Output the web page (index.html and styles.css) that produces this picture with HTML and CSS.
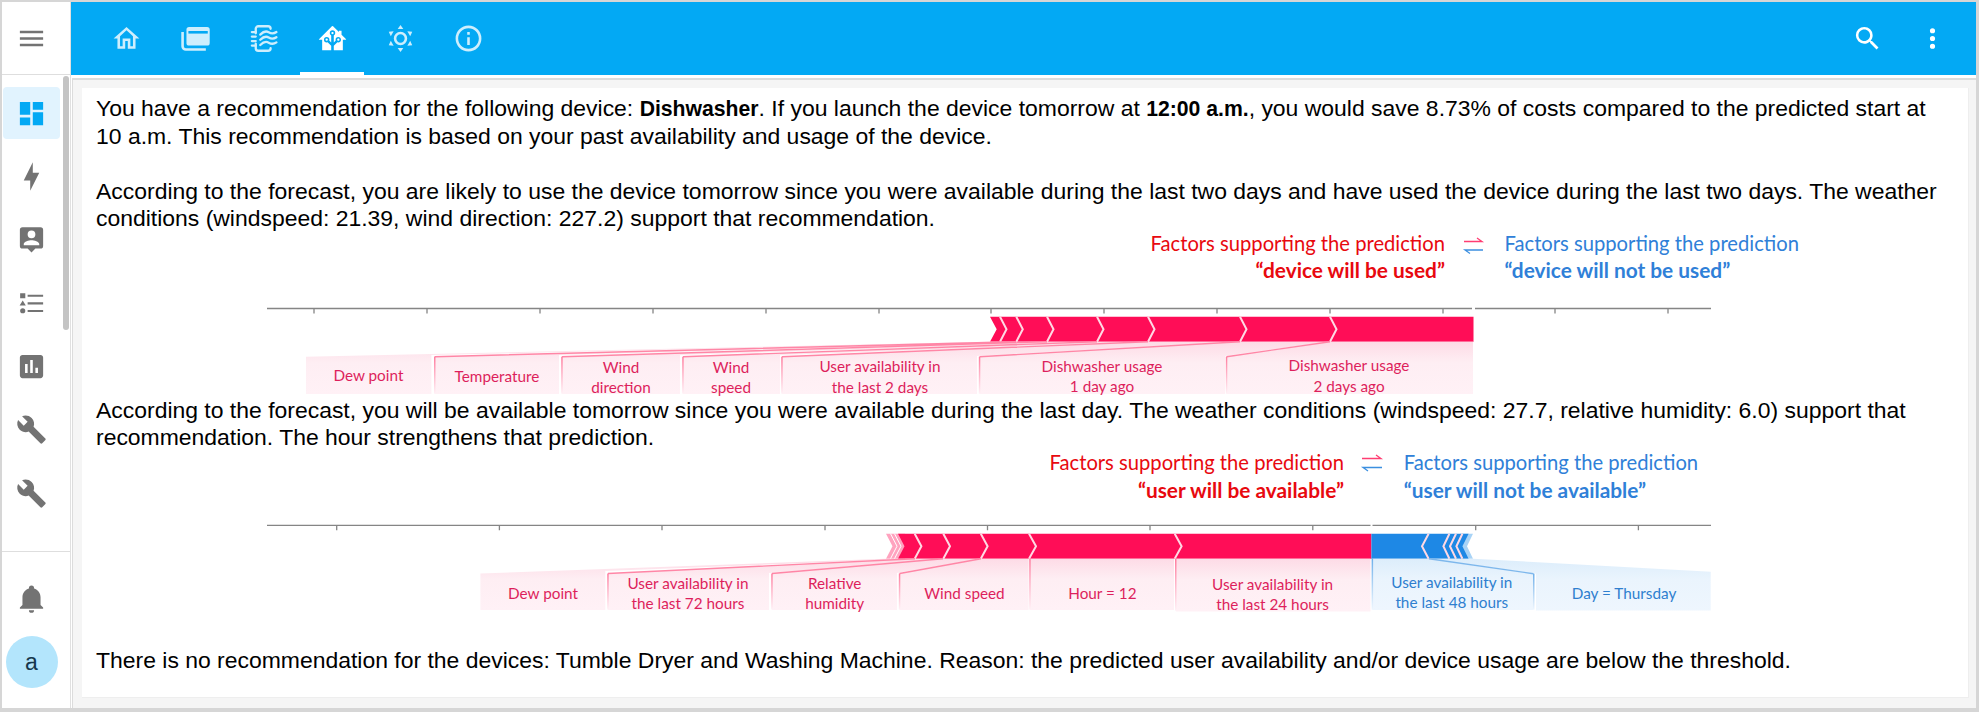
FILE: index.html
```html
<!DOCTYPE html>
<html lang="en">
<head>
    <meta charset="UTF-8">
    <meta name="viewport" content="width=device-width, initial-scale=1.0">
    <title>Recommendations</title>
    <link rel="stylesheet" href="styles.css">
</head>
<body>
    <div class="app">
        <aside class="sidebar">
            <div class="sidebar-top">
                <svg class="icon" viewBox="0 0 24 24"><path d="M3,6H21V8H3V6M3,11H21V13H3V11M3,16H21V18H3V16Z"/></svg>
            </div>
            <nav class="side-nav">
                <div class="side-item active"><svg class="icon" viewBox="0 0 24 24"><path d="M13,3V9H21V3M13,21H21V11H13M3,21H11V15H3M3,13H11V3H3V13Z"/></svg></div>
                <div class="side-item"><svg class="icon" viewBox="0 0 24 24"><path d="M11 15H6L13 1V9H18L11 23V15Z"/></svg></div>
                <div class="side-item"><svg class="icon" viewBox="0 0 24 24"><path fill-rule="evenodd" d="M5 2.5H19A2 2 0 0 1 21 4.5V17A2 2 0 0 1 19 19H15L12 22L9 19H5A2 2 0 0 1 3 17V4.5A2 2 0 0 1 5 2.5ZM12 5A3 3 0 1 0 12 11A3 3 0 1 0 12 5ZM6 16.5H18V15.5C18 13.5 14 12.5 12 12.5C10 12.5 6 13.5 6 15.5Z"/></svg></div>
                <div class="side-item"><svg class="icon" viewBox="0 0 24 24"><path d="M3.2 4H7.2V8H3.2ZM5.2 9.6L7.6 13.6H2.8ZM5.2 15.6A2 2 0 1 1 5.2 19.6A2 2 0 1 1 5.2 15.6ZM9 5.2H21V6.8H9ZM9 11.1H21V12.7H9ZM9 17H21V18.6H9Z"/></svg></div>
                <div class="side-item"><svg class="icon" viewBox="0 0 24 24"><path d="M19 3H5C3.9 3 3 3.9 3 5V19C3 20.1 3.9 21 5 21H19C20.1 21 21 20.1 21 19V5C21 3.9 20.1 3 19 3M9 17H7V10H9V17M13 17H11V7H13V17M17 17H15V13H17V17Z"/></svg></div>
                <div class="side-item"><svg class="icon" viewBox="0 0 24 24"><path d="M22.7,19L13.6,9.9C14.5,7.6 14,4.9 12.1,3C10.1,1 7.1,0.6 4.7,1.7L9,6L6,9L1.6,4.7C0.4,7.1 0.9,10.1 2.9,12.1C4.8,14 7.5,14.5 9.8,13.6L18.9,22.7C19.3,23.1 19.9,23.1 20.3,22.7L22.6,20.4C23.1,20 23.1,19.3 22.7,19Z"/></svg></div>
                <div class="side-item"><svg class="icon" viewBox="0 0 24 24"><path d="M22.7,19L13.6,9.9C14.5,7.6 14,4.9 12.1,3C10.1,1 7.1,0.6 4.7,1.7L9,6L6,9L1.6,4.7C0.4,7.1 0.9,10.1 2.9,12.1C4.8,14 7.5,14.5 9.8,13.6L18.9,22.7C19.3,23.1 19.9,23.1 20.3,22.7L22.6,20.4C23.1,20 23.1,19.3 22.7,19Z"/></svg></div>
            </nav>
            <div class="sidebar-bottom">
                <div class="side-item"><svg class="icon" viewBox="0 0 24 24"><path d="M21,19V20H3V19L5,17V11C5,7.9 7.03,5.17 10,4.29C10,4.19 10,4.1 10,4A2,2 0 0,1 12,2A2,2 0 0,1 14,4C14,4.1 14,4.19 14,4.29C16.97,5.17 19,7.9 19,11V17L21,19M14,21A2,2 0 0,1 12,23A2,2 0 0,1 10,21"/></svg></div>
                <div class="avatar">a</div>
            </div>
            <div class="side-scroll"></div>
        </aside>

        <main class="main">
            <header class="topbar">
                <div class="tab"><svg class="icon" viewBox="0 0 24 24"><path d="M12 5.69L17 10.19V18H15V12H9V18H7V10.19L12 5.69M12 3L2 12H5V20H11V14H13V20H19V12H22"/></svg></div>
                <div class="tab"><svg class="icon" viewBox="0 0 24 24"><path d="M2 7V18A2.5 2.5 0 0 0 4.5 20.5H20" fill="none" stroke="currentColor" stroke-width="2"/><rect class="cards-front" x="5" y="3" width="18" height="14.5" rx="2"/><rect class="cards-stripe" x="6.5" y="6.2" width="15" height="2"/></svg></div>
                <div class="tab"><svg class="icon" viewBox="0 0 24 24"><g fill="none" stroke="currentColor" stroke-width="1.8" stroke-linecap="round"><path d="M6 8V4.5A2 2 0 0 1 8 2.5H15.5A2 2 0 0 1 17.5 4.5"/><path d="M6 16V19.5A2 2 0 0 0 8 21.5H15.5A2 2 0 0 0 17.5 19.5"/><path d="M3 7H6M3 10.5H6M3 14H6M3 17.5H6"/><path d="M9.5 9C12 6.5 14 6 16 7.2C18 8.4 20 8.4 22 7"/><path d="M9.5 13C12 10.5 14 10 16 11.2C18 12.4 20 12.4 22 11"/><path d="M9.5 17C12 14.5 14 14 16 15.2C18 16.4 20 16.4 22 15"/></g></svg></div>
                <div class="tab active"><svg class="icon" viewBox="0 0 24 24"><path d="M21.8,13H20V21H13V17.67L15.79,14.88L16.5,15C17.66,15 18.6,14.06 18.6,12.9C18.6,11.74 17.66,10.8 16.5,10.8A2.1,2.1 0 0,0 14.4,12.9L14.5,13.61L13,15.13V9.65C13.66,9.29 14.1,8.6 14.1,7.8A2.1,2.1 0 0,0 12,5.7A2.1,2.1 0 0,0 9.9,7.8C9.9,8.6 10.34,9.29 11,9.65V15.13L9.5,13.61L9.6,12.9A2.1,2.1 0 0,0 7.5,10.8A2.1,2.1 0 0,0 5.4,12.9A2.1,2.1 0 0,0 7.5,15L8.21,14.88L11,17.67V21H4V13H2.25C1.83,13 1.42,13 1.42,12.79C1.43,12.57 1.85,12.15 2.29,11.71L11,3C11.33,2.67 11.67,2.33 12,2.33C12.33,2.33 12.67,2.67 13,3L17,7V6H19V9L21.78,11.78C22.15,12.15 22.54,12.54 22.56,12.78C22.57,13 22.18,13 21.8,13M7.5,12A0.9,0.9 0 0,1 8.4,12.9A0.9,0.9 0 0,1 7.5,13.8A0.9,0.9 0 0,1 6.6,12.9A0.9,0.9 0 0,1 7.5,12M16.5,12C17,12 17.4,12.4 17.4,12.9C17.4,13.4 17,13.8 16.5,13.8A0.9,0.9 0 0,1 15.6,12.9A0.9,0.9 0 0,1 16.5,12M12,6.9C12.5,6.9 12.9,7.3 12.9,7.8C12.9,8.3 12.5,8.7 12,8.7C11.5,8.7 11.1,8.3 11.1,7.8C11.1,7.3 11.5,6.9 12,6.9Z"/></svg></div>
                <div class="tab"><svg class="icon" viewBox="0 0 24 24"><circle cx="12" cy="12" r="4.2" fill="none" stroke="currentColor" stroke-width="2"/><g id="sun-rays"><path d="M12 1.5L14.2 4.6H9.8Z"/><path d="M12 1.5L14.2 4.6H9.8Z" transform="rotate(60 12 12)"/><path d="M12 1.5L14.2 4.6H9.8Z" transform="rotate(120 12 12)"/><path d="M12 1.5L14.2 4.6H9.8Z" transform="rotate(180 12 12)"/><path d="M12 1.5L14.2 4.6H9.8Z" transform="rotate(240 12 12)"/><path d="M12 1.5L14.2 4.6H9.8Z" transform="rotate(300 12 12)"/></g></svg></div>
                <div class="tab"><svg class="icon" viewBox="0 0 24 24"><path d="M11,9H13V7H11M12,20C7.59,20 4,16.41 4,12C4,7.59 7.59,4 12,4C16.41,4 20,7.59 20,12C20,16.41 16.41,20 12,20M12,2A10,10 0 0,0 2,12A10,10 0 0,0 12,22A10,10 0 0,0 22,12A10,10 0 0,0 12,2M11,17H13V11H11V17Z"/></svg></div>
                <div class="topbar-actions">
                    <div class="action"><svg class="icon" viewBox="0 0 24 24"><path d="M9.5,3A6.5,6.5 0 0,1 16,9.5C16,11.11 15.41,12.59 14.44,13.73L14.71,14H15.5L20.5,19L19,20.5L14,15.5V14.71L13.73,14.44C12.59,15.41 11.11,16 9.5,16A6.5,6.5 0 0,1 3,9.5A6.5,6.5 0 0,1 9.5,3M9.5,5C7,5 5,7 5,9.5C5,12 7,14 9.5,14C12,14 14,12 14,9.5C14,7 12,5 9.5,5Z"/></svg></div>
                    <div class="action"><svg class="icon" viewBox="0 0 24 24"><path d="M12,16A2,2 0 0,1 14,18A2,2 0 0,1 12,20A2,2 0 0,1 10,18A2,2 0 0,1 12,16M12,10A2,2 0 0,1 14,12A2,2 0 0,1 12,14A2,2 0 0,1 10,12A2,2 0 0,1 12,10M12,4A2,2 0 0,1 14,6A2,2 0 0,1 12,8A2,2 0 0,1 10,6A2,2 0 0,1 12,4Z"/></svg></div>
                </div>
            </header>

            <div class="panel">
                <section class="card">
                    <p>You have a recommendation for the following device: <b>Dishwasher</b>. If you launch the device tomorrow at <b>12:00 a.m.</b>, you would save 8.73% of costs compared to the predicted start at 10 a.m. This recommendation is based on your past availability and usage of the device.</p>
                    <p class="gap">According to the forecast, you are likely to use the device tomorrow since you were available during the last two days and have used the device during the last two days. The weather conditions (windspeed: 21.39, wind direction: 227.2) support that recommendation.</p>

                    <svg class="plot plot-one" viewBox="96 228 1858 169">
                        <defs>
                            <linearGradient id="pink-fill" x1="0" y1="0" x2="0" y2="1"><stop offset="0" stop-color="#fddbe6"/><stop offset="0.4" stop-color="#feeef3"/><stop offset="1" stop-color="#fff1f6"/></linearGradient>
                            <linearGradient id="blue-fill" x1="0" y1="0" x2="0" y2="1"><stop offset="0" stop-color="#dcedfb"/><stop offset="0.4" stop-color="#eaf4fd"/><stop offset="1" stop-color="#eef6fe"/></linearGradient>
                            <linearGradient id="pink-edge" x1="0" y1="0" x2="0" y2="1"><stop offset="0" stop-color="#ff7d9f"/><stop offset="1" stop-color="#fff1f6"/></linearGradient>
                            <linearGradient id="blue-edge" x1="0" y1="0" x2="0" y2="1"><stop offset="0" stop-color="#6fb0ea"/><stop offset="1" stop-color="#eef6fe"/></linearGradient>
                        </defs>

                        <text class="head red" x="1445" y="250.5" text-anchor="end">Factors supporting the prediction</text>
                        <text class="head red strong" x="1445" y="278" text-anchor="end">“device will be used”</text>
                        <path class="swap-red" d="M1464 241.5H1482L1477 238"/>
                        <path class="swap-blue" d="M1483 250H1465L1470 253.5"/>
                        <text class="head blue" x="1504.5" y="250.5">Factors supporting the prediction</text>
                        <text class="head blue strong" x="1504.5" y="278">“device will not be used”</text>

                        <path class="axis" d="M267 308.5H1472M1475 308.5H1711M314 308.5v5M427 308.5v5M540 308.5v5M653 308.5v5M766 308.5v5M879 308.5v5M991 308.5v5M1104 308.5v5M1217 308.5v5M1330 308.5v5M1443 308.5v5M1555 308.5v5M1668 308.5v5"/>

                        <path class="bar-red" d="M990 316.7H1473.5V341.7H990L996.7 329.2Z"/>
                        <path class="notch" d="M1000 316.7L1006.5 329.2L1000 341.7M1016.3 316.7L1022.8 329.2L1016.3 341.7M1047 316.7L1053.5 329.2L1047 341.7M1097 316.7L1103.5 329.2L1097 341.7M1148 316.7L1154.5 329.2L1148 341.7M1240 316.7L1246.5 329.2L1240 341.7M1330 316.7L1336.5 329.2L1330 341.7"/>

                        <path class="cell-pink" d="M306 394V356.7L990 341.7H1016L431.4 355V394Z"/>
                        <path class="cell-pink" d="M434.7 394V356.7L1016 341.7H1047L559 355V394Z"/>
                        <path class="cell-pink" d="M562 394V356.7L1047 341.7H1097L680 355V394Z"/>
                        <path class="cell-pink" d="M683 394V356.7L1097 341.7H1148L780 355V394Z"/>
                        <path class="cell-pink" d="M782 394V356.7L1148 341.7H1240L977 356V394Z"/>
                        <path class="cell-pink" d="M979.6 394V356.7L1240 341.7H1330L1225 356V394Z"/>
                        <path class="cell-pink" d="M1226.5 394V356.7L1330 341.7H1473V394Z"/>

                        <path class="link-pink" d="M434.7 356.7L1016 341.7M562 356.7L1047 341.7M683 356.7L1097 341.7M782 356.7L1148 341.7M979.6 356.7L1240 341.7M1226.5 356.7L1330 341.7"/>
                        <rect class="edge-pink" x="434" y="356.7" width="1.5" height="37"/>
                        <rect class="edge-pink" x="561.2" y="356.7" width="1.5" height="37"/>
                        <rect class="edge-pink" x="682.2" y="356.7" width="1.5" height="37"/>
                        <rect class="edge-pink" x="781.2" y="356.7" width="1.5" height="37"/>
                        <rect class="edge-pink" x="978.8" y="356.7" width="1.5" height="37"/>
                        <rect class="edge-pink" x="1225.8" y="356.7" width="1.5" height="37"/>

                        <text class="tag pink" x="368.4" y="381">Dew point</text>
                        <text class="tag pink" x="497" y="382">Temperature</text>
                        <text class="tag pink" x="621" y="372.5">Wind</text>
                        <text class="tag pink" x="621" y="393">direction</text>
                        <text class="tag pink" x="731" y="372.5">Wind</text>
                        <text class="tag pink" x="731" y="393">speed</text>
                        <text class="tag pink" x="880" y="372">User availability in</text>
                        <text class="tag pink" x="880" y="392.5">the last 2 days</text>
                        <text class="tag pink" x="1102" y="371.5">Dishwasher usage</text>
                        <text class="tag pink" x="1102" y="392">1 day ago</text>
                        <text class="tag pink" x="1349" y="371">Dishwasher usage</text>
                        <text class="tag pink" x="1349" y="391.5">2 days ago</text>
                    </svg>

                    <p>According to the forecast, you will be available tomorrow since you were available during the last day. The weather conditions (windspeed: 27.7, relative humidity: 6.0) support that recommendation. The hour strengthens that prediction.</p>

                    <svg class="plot plot-two" viewBox="96 446 1858 200">
                        <text class="head red" x="1344" y="469" text-anchor="end">Factors supporting the prediction</text>
                        <text class="head red strong" x="1344" y="496.5" text-anchor="end">“user will be available”</text>
                        <path class="swap-red" d="M1362 457.5H1381L1376 454"/>
                        <path class="swap-blue" d="M1382 466.5H1363L1368 470"/>
                        <text class="head blue" x="1403.7" y="469">Factors supporting the prediction</text>
                        <text class="head blue strong" x="1403.7" y="496.5">“user will not be available”</text>

                        <path class="axis" d="M267 524.3H1370.5M1372.5 524.3H1711M336.7 524.3v5M499.4 524.3v5M662 524.3v5M825 524.3v5M987.5 524.3v5M1150 524.3v5M1312.8 524.3v5M1475.7 524.3v5M1638.4 524.3v5"/>

                        <path class="bar-fade-red" d="M886 532.7H905V557.7H886L892.5 545.2Z"/>
                        <path class="notch-soft" d="M890.5 532.7L897 545.2L890.5 557.7M894.5 532.7L901 545.2L894.5 557.7"/>
                        <path class="bar-red" d="M898 532.7H1371.4V557.7H898L904.5 545.2Z"/>
                        <path class="notch" d="M914.7 532.7L921.4 545.2L914.7 557.7M943.3 532.7L950 545.2L943.3 557.7M980.8 532.7L987.6 545.2L980.8 557.7M1029 532.7L1036 545.2L1029 557.7M1174.7 532.7L1181.6 545.2L1174.7 557.7"/>

                        <path class="bar-fade-blue" d="M1460 532.7H1473L1467 545.2L1473 557.7H1460Z"/>
                        <path class="bar-blue" d="M1371.4 532.7H1468.6L1462.4 545.2L1468.6 557.7H1371.4Z"/>
                        <path class="notch" d="M1428.6 532.7L1422 545.2L1428.6 557.7M1449.4 532.7L1443.4 545.2L1449.4 557.7M1456 532.7L1450 545.2L1456 557.7M1462.4 532.7L1456.4 545.2L1462.4 557.7"/>

                        <path class="cell-pink" d="M480.4 609V572.5L886 557.7H915L605.3 570V609Z"/>
                        <path class="cell-pink" d="M608 609V572.5L915 557.7H943L769 572V609Z"/>
                        <path class="cell-pink" d="M772 609V572.5L943 557.7H981L897 572V609Z"/>
                        <path class="cell-pink" d="M899.6 609V572.5L981 557.7H1028.6V609Z"/>
                        <path class="cell-pink" d="M1030 609V557.7H1174V609Z"/>
                        <path class="cell-pink" d="M1176 610.5V557.7H1370.5V610.5Z"/>
                        <path class="cell-blue" d="M1372.6 609V557.7H1429L1533 572.7V609Z"/>
                        <path class="cell-blue" d="M1536 609.5V572.7L1429 557.7H1473L1710.7 570.7V609.5Z"/>

                        <path class="link-pink" d="M608 572.5L915 557.7M772 572.5L943 557.7M899.6 572.5L981 557.7"/>
                        <path class="link-blue" d="M1429 557.7L1533.5 572.7"/>
                        <rect class="edge-pink" x="607.2" y="572.5" width="1.5" height="36"/>
                        <rect class="edge-pink" x="771.2" y="572.5" width="1.5" height="36"/>
                        <rect class="edge-pink" x="898.8" y="572.5" width="1.5" height="36"/>
                        <rect class="edge-pink" x="1029.2" y="557.7" width="1.5" height="51"/>
                        <rect class="edge-pink" x="1175" y="557.7" width="1.5" height="52"/>
                        <rect class="edge-blue" x="1371.6" y="557.7" width="1.5" height="51"/>
                        <rect class="edge-blue" x="1533" y="572.7" width="1.5" height="36"/>

                        <text class="tag pink" x="543" y="597.5">Dew point</text>
                        <text class="tag pink" x="688" y="588">User availability in</text>
                        <text class="tag pink" x="688" y="608">the last 72 hours</text>
                        <text class="tag pink" x="834.7" y="588">Relative</text>
                        <text class="tag pink" x="834.7" y="608">humidity</text>
                        <text class="tag pink" x="964.5" y="598">Wind speed</text>
                        <text class="tag pink" x="1102.4" y="598">Hour = 12</text>
                        <text class="tag pink" x="1272.6" y="589">User availability in</text>
                        <text class="tag pink" x="1272.6" y="609">the last 24 hours</text>
                        <text class="tag blue" x="1451.8" y="587">User availability in</text>
                        <text class="tag blue" x="1451.8" y="607">the last 48 hours</text>
                        <text class="tag blue" x="1624" y="598">Day = Thursday</text>
                    </svg>

                    <p>There is no recommendation for the devices: Tumble Dryer and Washing Machine. Reason: the predicted user availability and/or device usage are below the threshold.</p>
                </section>
            </div>
        </main>
    </div>
</body>
</html>
```

FILE: styles.css
```css
* {
    box-sizing: border-box;
}

body {
    margin: 0;
    background-color: #d6d6d6;
}

.app {
    display: flex;
    height: 712px;
    border-style: solid;
    border-color: #d6d6d6;
    border-width: 2px 3px 4px 2px;
    font-family: "Liberation Sans", Arial, sans-serif;
}

.icon {
    display: block;
    width: 31px;
    height: 31px;
    fill: currentColor;
}

/* sidebar */
.sidebar {
    position: relative;
    display: flex;
    flex-direction: column;
    flex: 0 0 69px;
    background-color: #fff;
    border-right: 1px solid #e0e0e0;
    color: #737373;
}

.sidebar-top {
    display: flex;
    align-items: center;
    height: 73px;
    padding-left: 14px;
    border-bottom: 1px solid #dedede;
}

.side-nav {
    display: flex;
    flex-direction: column;
    gap: 11.4px;
    padding-top: 12px;
    flex: 1;
}

.side-item {
    display: flex;
    align-items: center;
    justify-content: center;
    width: 57px;
    height: 52px;
    margin-left: 1px;
    border-radius: 4px;
}

.side-item.active {
    background-color: #e1f3fe;
    color: #03a9f4;
}

.sidebar-bottom {
    display: flex;
    flex-direction: column;
    gap: 12px;
    padding: 20px 0 20px;
    border-top: 1px solid #dedede;
}

.avatar {
    display: flex;
    align-items: center;
    justify-content: center;
    width: 52px;
    height: 52px;
    margin-left: 3.5px;
    border-radius: 50%;
    background-color: #b3e5fc;
    color: #17384d;
    font-family: "Liberation Sans", Arial, sans-serif;
    font-size: 23px;
}

.side-scroll {
    position: absolute;
    top: 74px;
    right: 1px;
    width: 6px;
    height: 254px;
    border-radius: 3px;
    background-color: #c4c4c4;
}

/* header */
.main {
    flex: 1;
    display: flex;
    flex-direction: column;
    min-width: 0;
    background-color: #fff;
}

.topbar {
    display: flex;
    flex: 0 0 73px;
    padding-left: 21.8px;
    background-color: #03a9f4;
    color: #cdeefd;
}

.tab {
    position: relative;
    display: flex;
    align-items: center;
    justify-content: center;
    width: 68.4px;
}

.tab.active {
    color: #fff;
}

.tab.active::after {
    content: "";
    position: absolute;
    left: 2px;
    right: 2px;
    bottom: 0;
    height: 3px;
    background-color: #fff;
}

.cards-front {
    fill: #cdeefd;
}

.cards-stripe {
    fill: #03a9f4;
}

.topbar-actions {
    display: flex;
    margin-left: auto;
    padding-right: 11px;
    color: #fff;
}

.action {
    display: flex;
    align-items: center;
    justify-content: center;
    width: 64.7px;
}

/* content */
.panel {
    flex: 1;
    display: flex;
    min-height: 0;
    margin: 3px 0 0 1px;
    padding: 8px 8px 10px 9px;
    border-top: 2px solid #dcdcdc;
    border-left: 1px solid #dcdcdc;
    background-color: #f5f5f5;
}

.card {
    flex: 1;
    padding: 7px 14px 0;
    background-color: #fff;
    border-right: 1px solid #eee;
    border-bottom: 1px solid #eee;
    color: #000;
    font-size: 22.95px;
    line-height: 27.5px;
}

.card p {
    margin: 0;
}

.card p.gap {
    margin-top: 27.5px;
}

.card b {
    font-size: 21.2px;
}

/* force plots */
.plot {
    display: block;
    width: 1858px;
    margin-top: -5px;
}

.plot-one {
    height: 169px;
}

.plot-two {
    height: 200px;
}

.plot text {
    font-family: Lato, "Open Sans", sans-serif;
}

.head {
    font-size: 20.2px;
}

.head.strong {
    font-size: 20.85px;
    font-weight: 700;
}

.head.red {
    fill: #e8090f;
}

.head.blue {
    fill: #2f80d8;
}

.tag {
    font-size: 15.3px;
    text-anchor: middle;
}

.tag.pink {
    fill: #dd1f5c;
}

.tag.blue {
    fill: #2f7fcf;
}

.swap-red,
.swap-blue {
    fill: none;
    stroke-width: 1.3;
}

.swap-red {
    stroke: #ff3d72;
}

.swap-blue {
    stroke: #3b8fe0;
}

.axis {
    fill: none;
    stroke: #858585;
    stroke-width: 1.3;
}

.bar-red {
    fill: #ff0d57;
}

.bar-blue {
    fill: #1e88e5;
}

.bar-fade-red {
    fill: #ffa3bf;
}

.bar-fade-blue {
    fill: #a8d3f6;
}

.notch {
    fill: none;
    stroke: #ffd9e4;
    stroke-width: 2;
}

.notch-soft {
    fill: none;
    stroke: #fff;
    stroke-width: 1;
}

.cell-pink {
    fill: url(#pink-fill);
}

.cell-blue {
    fill: url(#blue-fill);
}

.link-pink {
    fill: none;
    stroke: #ff86a6;
    stroke-width: 1.4;
}

.link-blue {
    fill: none;
    stroke: #7db7ec;
    stroke-width: 1.4;
}

.edge-pink {
    fill: url(#pink-edge);
}

.edge-blue {
    fill: url(#blue-edge);
}
```
